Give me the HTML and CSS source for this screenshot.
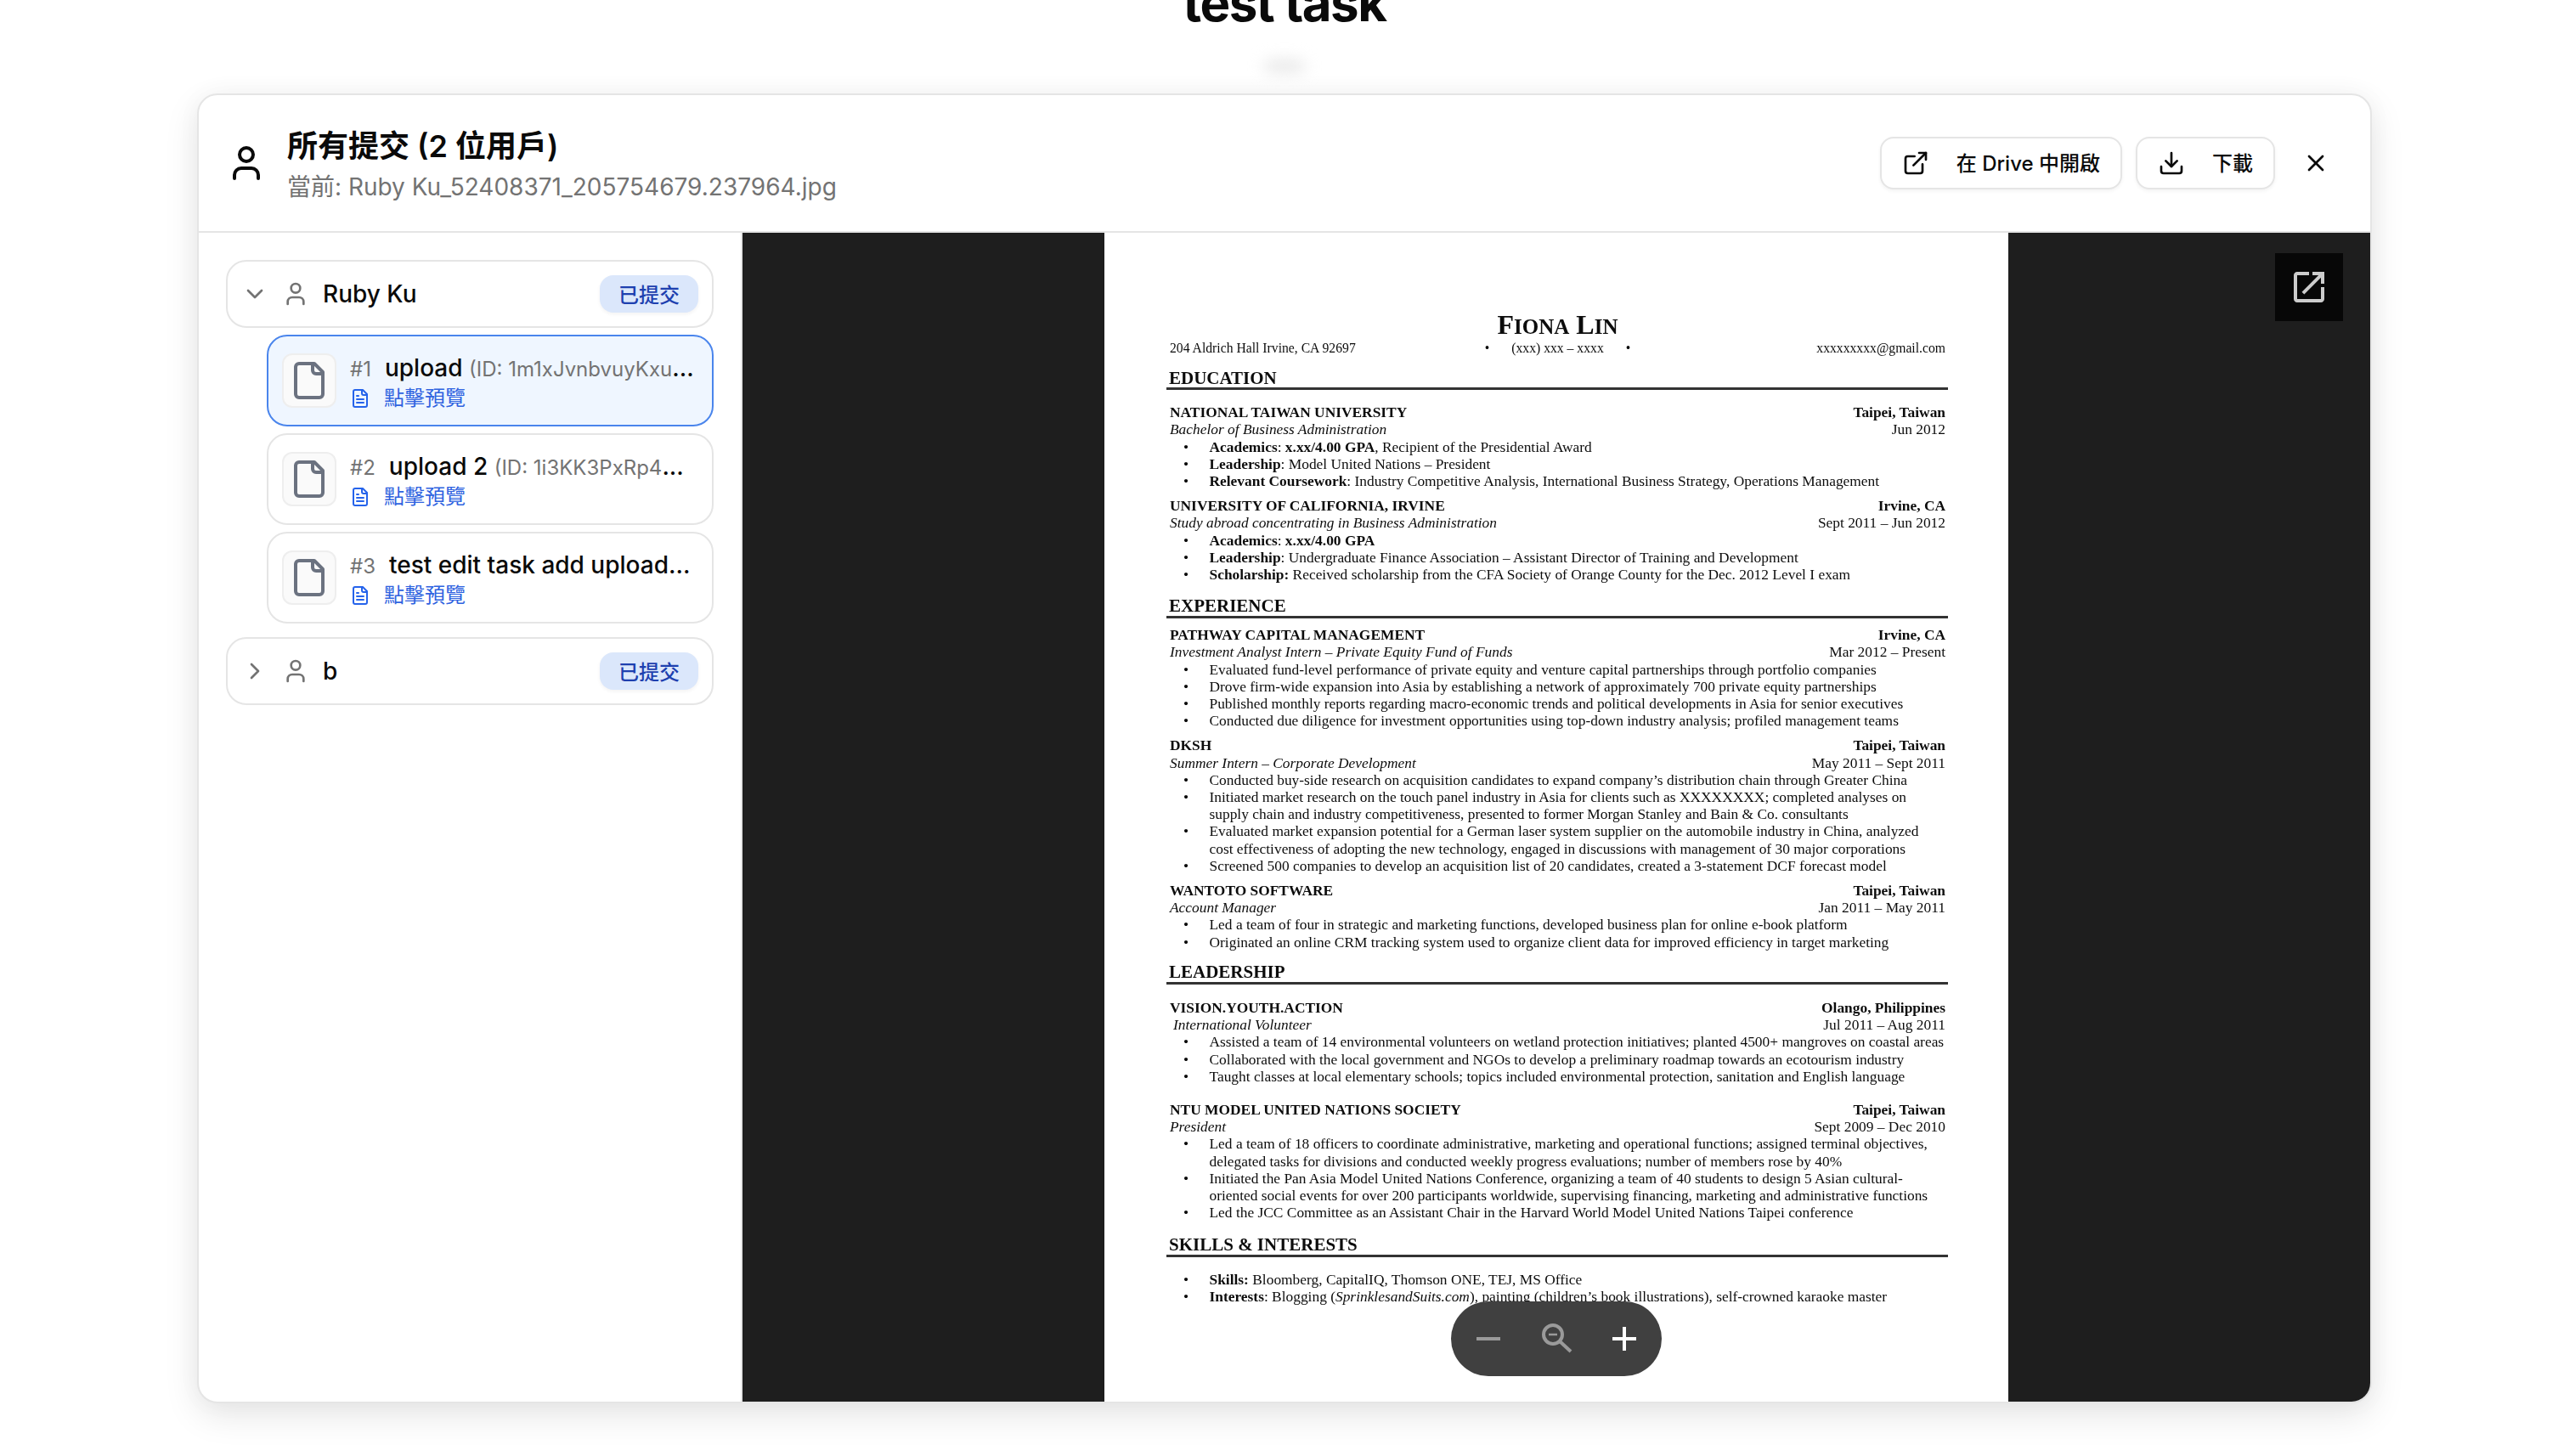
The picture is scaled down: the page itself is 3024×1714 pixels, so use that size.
FILE: index.html
```html
<!DOCTYPE html>
<html lang="zh-Hant">
<head>
<meta charset="utf-8">
<title>test task</title>
<link rel="stylesheet" href="styles.css">
</head>
<body>
<div class="page">
  <header class="page-head">
    <h1 class="page-title">test task</h1>
    <div class="page-blur"></div>
  </header>
  <section class="modal">
    <div class="modal-head">
      <svg class="ic ic-48 ic-dark" viewBox="0 0 24 24"><path d="M19 21v-2a4 4 0 0 0-4-4H9a4 4 0 0 0-4 4v2"/><circle cx="12" cy="7" r="4"/></svg>
      <div class="head-text">
        <div class="head-title">所有提交 (2 位用戶)</div>
        <div class="head-sub">當前: Ruby Ku_52408371_205754679.237964.jpg</div>
      </div>
      <div class="head-actions">
        <button class="btn"><svg class="ic ic-32 ic-dark" viewBox="0 0 24 24"><path d="M15 3h6v6"/><path d="M10 14 21 3"/><path d="M18 13v6a2 2 0 0 1-2 2H5a2 2 0 0 1-2-2V8a2 2 0 0 1 2-2h6"/></svg><span>在 Drive 中開啟</span></button>
        <button class="btn"><svg class="ic ic-32 ic-dark" viewBox="0 0 24 24"><path d="M12 15V3"/><path d="M21 15v4a2 2 0 0 1-2 2H5a2 2 0 0 1-2-2v-4"/><path d="m7 10 5 5 5-5"/></svg><span>下載</span></button>
        <button class="close"><svg class="ic ic-32 ic-dark" viewBox="0 0 24 24"><path d="M18 6 6 18"/><path d="m6 6 12 12"/></svg></button>
      </div>
    </div>
    <div class="modal-body">
      <aside class="side">
        <div class="user-card">
          <svg class="ic ic-32 ic-grey" viewBox="0 0 24 24"><path d="m6 9 6 6 6-6"/></svg>
          <svg class="ic ic-32 ic-grey" viewBox="0 0 24 24"><path d="M19 21v-2a4 4 0 0 0-4-4H9a4 4 0 0 0-4 4v2"/><circle cx="12" cy="7" r="4"/></svg>
          <span class="user-name">Ruby Ku</span>
          <span class="badge">已提交</span>
        </div>
        <div class="files">
          <div class="file-card selected">
            <div class="file-box"><svg class="ic ic-48 ic-file" viewBox="0 0 24 24"><path d="M15 2H6a2 2 0 0 0-2 2v16a2 2 0 0 0 2 2h12a2 2 0 0 0 2-2V7Z"/><path d="M14 2v4a2 2 0 0 0 2 2h4"/></svg></div>
            <div class="file-text">
              <div class="file-top"><span class="file-no">#1</span><span class="file-name">upload <span class="file-id">(ID: 1m1xJvnbvuyKxu</span></span><span class="file-more">...</span></div>
              <div class="file-link"><svg class="ic ic-24 ic-blue" viewBox="0 0 24 24"><path d="M15 2H6a2 2 0 0 0-2 2v16a2 2 0 0 0 2 2h12a2 2 0 0 0 2-2V7Z"/><path d="M14 2v4a2 2 0 0 0 2 2h4"/><path d="M10 9H8"/><path d="M16 13H8"/><path d="M16 17H8"/></svg><span>點擊預覽</span></div>
            </div>
          </div>
          <div class="file-card">
            <div class="file-box"><svg class="ic ic-48 ic-file" viewBox="0 0 24 24"><path d="M15 2H6a2 2 0 0 0-2 2v16a2 2 0 0 0 2 2h12a2 2 0 0 0 2-2V7Z"/><path d="M14 2v4a2 2 0 0 0 2 2h4"/></svg></div>
            <div class="file-text">
              <div class="file-top"><span class="file-no">#2</span><span class="file-name">upload 2 <span class="file-id">(ID: 1i3KK3PxRp4</span></span><span class="file-more">...</span></div>
              <div class="file-link"><svg class="ic ic-24 ic-blue" viewBox="0 0 24 24"><path d="M15 2H6a2 2 0 0 0-2 2v16a2 2 0 0 0 2 2h12a2 2 0 0 0 2-2V7Z"/><path d="M14 2v4a2 2 0 0 0 2 2h4"/><path d="M10 9H8"/><path d="M16 13H8"/><path d="M16 17H8"/></svg><span>點擊預覽</span></div>
            </div>
          </div>
          <div class="file-card">
            <div class="file-box"><svg class="ic ic-48 ic-file" viewBox="0 0 24 24"><path d="M15 2H6a2 2 0 0 0-2 2v16a2 2 0 0 0 2 2h12a2 2 0 0 0 2-2V7Z"/><path d="M14 2v4a2 2 0 0 0 2 2h4"/></svg></div>
            <div class="file-text">
              <div class="file-top"><span class="file-no">#3</span><span class="file-name">test edit task add upload</span><span class="file-more">...</span></div>
              <div class="file-link"><svg class="ic ic-24 ic-blue" viewBox="0 0 24 24"><path d="M15 2H6a2 2 0 0 0-2 2v16a2 2 0 0 0 2 2h12a2 2 0 0 0 2-2V7Z"/><path d="M14 2v4a2 2 0 0 0 2 2h4"/><path d="M10 9H8"/><path d="M16 13H8"/><path d="M16 17H8"/></svg><span>點擊預覽</span></div>
            </div>
          </div>
        </div>
        <div class="user-card user-last">
          <svg class="ic ic-32 ic-grey" viewBox="0 0 24 24"><path d="m9 18 6-6-6-6"/></svg>
          <svg class="ic ic-32 ic-grey" viewBox="0 0 24 24"><path d="M19 21v-2a4 4 0 0 0-4-4H9a4 4 0 0 0-4 4v2"/><circle cx="12" cy="7" r="4"/></svg>
          <span class="user-name">b</span>
          <span class="badge">已提交</span>
        </div>
      </aside>
      <div class="preview">
        <article class="paper">
          <div class="cv-name">F<span class="cv-sc">IONA</span> L<span class="cv-sc">IN</span></div>
          <div class="cv-contact"><span>204 Aldrich Hall Irvine, CA 92697</span><span class="cv-mid"><i>•</i><span>(xxx) xxx – xxxx</span><i>•</i></span><span class="cv-mail">xxxxxxxxx@gmail.com</span></div>

          <h2 class="cv-head cv-edu">EDUCATION</h2>
          <div class="cv-entry cv-first">
            <div class="cv-row cv-b"><span>NATIONAL TAIWAN UNIVERSITY</span><span>Taipei, Taiwan</span></div>
            <div class="cv-row"><em>Bachelor of Business Administration</em><span>Jun 2012</span></div>
            <ul class="cv-list">
              <li><span><b>Academics</b>: <b>x.xx/4.00 GPA</b>, Recipient of the Presidential Award</span></li>
              <li><span><b>Leadership</b>: Model United Nations – President</span></li>
              <li><span><b>Relevant Coursework</b>: Industry Competitive Analysis, International Business Strategy, Operations Management</span></li>
            </ul>
          </div>
          <div class="cv-entry">
            <div class="cv-row cv-b"><span>UNIVERSITY OF CALIFORNIA, IRVINE</span><span>Irvine, CA</span></div>
            <div class="cv-row"><em>Study abroad concentrating in Business Administration</em><span>Sept 2011 – Jun 2012</span></div>
            <ul class="cv-list">
              <li><span><b>Academics</b>: <b>x.xx/4.00 GPA</b></span></li>
              <li><span><b>Leadership</b>: Undergraduate Finance Association – Assistant Director of Training and Development</span></li>
              <li><span><b>Scholarship:</b> Received scholarship from the CFA Society of Orange County for the Dec. 2012 Level I exam</span></li>
            </ul>
          </div>

          <h2 class="cv-head cv-exp">EXPERIENCE</h2>
          <div class="cv-entry">
            <div class="cv-row cv-b"><span>PATHWAY CAPITAL MANAGEMENT</span><span>Irvine, CA</span></div>
            <div class="cv-row"><em>Investment Analyst Intern – Private Equity Fund of Funds</em><span>Mar 2012 – Present</span></div>
            <ul class="cv-list">
              <li><span>Evaluated fund-level performance of private equity and venture capital partnerships through portfolio companies</span></li>
              <li><span>Drove firm-wide expansion into Asia by establishing a network of approximately 700 private equity partnerships</span></li>
              <li><span>Published monthly reports regarding macro-economic trends and political developments in Asia for senior executives</span></li>
              <li><span>Conducted due diligence for investment opportunities using top-down industry analysis; profiled management teams</span></li>
            </ul>
          </div>
          <div class="cv-entry">
            <div class="cv-row cv-b"><span>DKSH</span><span>Taipei, Taiwan</span></div>
            <div class="cv-row"><em>Summer Intern – Corporate Development</em><span>May 2011 – Sept 2011</span></div>
            <ul class="cv-list">
              <li><span>Conducted buy-side research on acquisition candidates to expand company’s distribution chain through Greater China</span></li>
              <li><span>Initiated market research on the touch panel industry in Asia for clients such as XXXXXXXX; completed analyses on<br>supply chain and industry competitiveness, presented to former Morgan Stanley and Bain &amp; Co. consultants</span></li>
              <li><span>Evaluated market expansion potential for a German laser system supplier on the automobile industry in China, analyzed<br>cost effectiveness of adopting the new technology, engaged in discussions with management of 30 major corporations</span></li>
              <li><span>Screened 500 companies to develop an acquisition list of 20 candidates, created a 3-statement DCF forecast model</span></li>
            </ul>
          </div>
          <div class="cv-entry">
            <div class="cv-row cv-b"><span>WANTOTO SOFTWARE</span><span>Taipei, Taiwan</span></div>
            <div class="cv-row"><em>Account Manager</em><span>Jan 2011 – May 2011</span></div>
            <ul class="cv-list">
              <li><span>Led a team of four in strategic and marketing functions, developed business plan for online e-book platform</span></li>
              <li><span>Originated an online CRM tracking system used to organize client data for improved efficiency in target marketing</span></li>
            </ul>
          </div>

          <h2 class="cv-head cv-lead">LEADERSHIP</h2>
          <div class="cv-entry cv-mid-gap">
            <div class="cv-row cv-b"><span>VISION.YOUTH.ACTION</span><span>Olango, Philippines</span></div>
            <div class="cv-row"><em class="cv-indent">International Volunteer</em><span>Jul 2011 – Aug 2011</span></div>
            <ul class="cv-list">
              <li><span>Assisted a team of 14 environmental volunteers on wetland protection initiatives; planted 4500+ mangroves on coastal areas</span></li>
              <li><span>Collaborated with the local government and NGOs to develop a preliminary roadmap towards an ecotourism industry</span></li>
              <li><span>Taught classes at local elementary schools; topics included environmental protection, sanitation and English language</span></li>
            </ul>
          </div>
          <div class="cv-entry cv-wide">
            <div class="cv-row cv-b"><span>NTU MODEL UNITED NATIONS SOCIETY</span><span>Taipei, Taiwan</span></div>
            <div class="cv-row"><em>President</em><span>Sept 2009 – Dec 2010</span></div>
            <ul class="cv-list">
              <li><span>Led a team of 18 officers to coordinate administrative, marketing and operational functions; assigned terminal objectives,<br>delegated tasks for divisions and conducted weekly progress evaluations; number of members rose by 40%</span></li>
              <li><span>Initiated the Pan Asia Model United Nations Conference, organizing a team of 40 students to design 5 Asian cultural-<br>oriented social events for over 200 participants worldwide, supervising financing, marketing and administrative functions</span></li>
              <li><span>Led the JCC Committee as an Assistant Chair in the Harvard World Model United Nations Taipei conference</span></li>
            </ul>
          </div>

          <h2 class="cv-head cv-skills">SKILLS &amp; INTERESTS</h2>
          <ul class="cv-list cv-skill-list">
            <li><span><b>Skills:</b> Bloomberg, CapitalIQ, Thomson ONE, TEJ, MS Office</span></li>
            <li><span><b>Interests</b>: Blogging (<em>SprinklesandSuits.com</em>), painting (children’s book illustrations), self-crowned karaoke master</span></li>
          </ul>
        </article>
        <button class="popout"><svg class="ic-fill" viewBox="0 0 24 24"><path d="M19 19H5V5h7V3H5c-1.11 0-2 .9-2 2v14c0 1.1.89 2 2 2h14c1.1 0 2-.9 2-2v-7h-2v7zM14 3v2h3.59l-9.83 9.83 1.41 1.41L19 6.41V10h2V3h-7z"/></svg></button>
        <div class="zoom-pill">
          <svg class="pill-ic pill-dim" viewBox="0 0 48 48"><path d="M10 24h28"/></svg>
          <svg class="pill-ic pill-dim" viewBox="0 0 48 48"><circle cx="20" cy="19" r="11"/><path d="M28 27l13 12"/><path class="thin" d="M15 19h10"/></svg>
          <svg class="pill-ic pill-on" viewBox="0 0 48 48"><path d="M10 24h28"/><path d="M24 10v28"/></svg>
        </div>
      </div>
    </div>
  </section>
</div>
</body>
</html>
```

FILE: styles.css
```css
* { box-sizing: border-box; }
html, body { margin: 0; padding: 0; background: #fff; }
body { font-family: Inter, "Noto Sans CJK TC", sans-serif; color: #0a0a0a; }
.page { width: 3024px; height: 1714px; overflow: hidden; display: flex; flex-direction: column; align-items: center; }

.page-head { height: 110px; width: 100%; display: flex; flex-direction: column; align-items: center; flex: none; }
.page-title { margin: -33px 0 0; font-size: 60px; line-height: 72px; font-weight: 700; letter-spacing: -1.5px; }
.page-blur { width: 48px; height: 14px; margin-top: 32px; background: #e6e6e6; border-radius: 8px; filter: blur(9px); }

.modal { width: 2560px; height: 1542px; flex: none; background: #fff; border: 2px solid #e5e5e5; border-radius: 24px; overflow: hidden; display: flex; flex-direction: column; box-shadow: 0 14px 40px rgba(0,0,0,.1), 0 0 30px rgba(0,0,0,.03); }

.modal-head { height: 162px; flex: none; border-bottom: 2px solid #e5e5e5; display: flex; align-items: center; padding: 0 32px; gap: 24px; }
.head-text { flex: 1; min-width: 0; display: flex; flex-direction: column; gap: 4px; padding-top: 3px; }
.head-title { font-size: 36px; line-height: 48px; font-weight: 600; }
.head-sub { font-size: 28px; line-height: 40px; color: #737373; }
.head-actions { display: flex; align-items: center; gap: 16px; }

.ic { fill: none; stroke: currentColor; stroke-width: 2; stroke-linecap: round; stroke-linejoin: round; flex: none; display: block; }
.ic-48 { width: 48px; height: 48px; }
.ic-32 { width: 32px; height: 32px; }
.ic-24 { width: 24px; height: 24px; }
.ic-dark { color: #0a0a0a; }
.ic-grey { color: #737373; }
.ic-file { color: #6b7280; }
.ic-blue { color: #2563eb; }

.btn { height: 62px; padding: 0 24px; display: flex; align-items: center; gap: 32px; background: #fff; border: 2px solid #e5e5e5; border-radius: 16px; box-shadow: 0 2px 4px rgba(0,0,0,.05); font: 500 24px Inter, "Noto Sans CJK TC", sans-serif; color: #0a0a0a; }
.btn span { margin-bottom: 3px; }
.close { width: 64px; height: 64px; padding: 0; border: 0; background: none; display: flex; align-items: center; justify-content: center; }

.modal-body { flex: 1; min-height: 0; display: flex; }
.side { width: 640px; flex: none; padding: 32px 32px 0; border-right: 2px solid #e5e5e5; display: flex; flex-direction: column; }
.user-card { height: 80px; flex: none; border: 2px solid #e5e5e5; border-radius: 24px; display: flex; align-items: center; padding: 0 16px; gap: 16px; background: #fff; }
.user-last { margin-top: 16px; }
.user-name { flex: 1; font-size: 28px; font-weight: 500; }
.badge { width: 116px; height: 44px; flex: none; display: flex; align-items: center; justify-content: center; padding-bottom: 2px; background: #dbe7fb; color: #1e40af; border-radius: 16px; font-size: 24px; font-weight: 500; box-shadow: 0 2px 4px rgba(0,0,0,.05); }

.files { margin: 8px 0 0 48px; display: flex; flex-direction: column; gap: 8px; }
.file-card { height: 108px; border: 2px solid #e5e5e5; border-radius: 24px; display: flex; align-items: center; padding: 0 16px; gap: 16px; background: #fff; }
.file-card.selected { background: #eff6ff; border-color: #4a85ec; }
.file-box { width: 64px; height: 64px; flex: none; background: #fafafa; border: 2px solid #eeeeee; border-radius: 12px; display: flex; align-items: center; justify-content: center; }
.file-text { flex: 1; min-width: 0; display: flex; flex-direction: column; }
.file-top { display: flex; align-items: baseline; line-height: 40px; white-space: nowrap; }
.file-no { font-size: 24px; color: #737373; flex: none; margin-right: 16px; }
.file-name { font-size: 28px; font-weight: 500; }
.file-more { font-size: 28px; font-weight: 500; }
.file-id { font-size: 24px; font-weight: 400; color: #737373; }
.file-link { display: flex; align-items: center; gap: 16px; color: #2f63e0; font-size: 24px; line-height: 28px; }

.preview { flex: 1; min-width: 0; position: relative; background: #1e1e1e; display: flex; justify-content: center; }
.paper { width: 1064px; flex: none; background: #fff; padding: 90px 74px 0 77px; font-family: "Liberation Serif", serif; color: #0c0c0c; font-size: 17.4px; line-height: 20.2px; white-space: nowrap; overflow: hidden; filter: blur(.45px); }

.cv-name { text-align: center; font-size: 32px; line-height: 36px; font-weight: 700; }
.cv-sc { font-size: 25px; }
.cv-contact { display: grid; grid-template-columns: 1fr auto 1fr; margin-top: -3px; font-size: 15.7px; }
.cv-mid { display: flex; gap: 26px; }
.cv-mid i { font-style: normal; }
.cv-mail { text-align: right; }
.cv-head { margin: 0 -3px 0 -4px; padding-left: 3px; font-size: 21px; line-height: 24px; font-weight: 700; border-bottom: 3px solid #333; }
.cv-edu { margin-top: 14px; line-height: 22px; }
.cv-exp { margin-top: 15px; }
.cv-lead { margin-top: 13px; }
.cv-skills { margin-top: 16px; }
.cv-entry { margin-top: 9px; }
.cv-first { margin-top: 16px; }
.cv-mid-gap { margin-top: 17px; }
.cv-wide { margin-top: 19px; }
.cv-row { display: flex; justify-content: space-between; }
.cv-b { font-weight: 700; }
.cv-indent { margin-left: 4px; }
.cv-list { list-style: none; margin: 0; padding: 0 0 0 16px; }
.cv-list li { display: grid; grid-template-columns: 30.5px 1fr; }
.cv-list li::before { content: "•"; }
.cv-skill-list { margin-top: 16px; line-height: 20px; }

.popout { position: absolute; top: 24px; right: 32px; width: 80px; height: 80px; padding: 16px; border: 0; background: #070707; }
.ic-fill { width: 48px; height: 48px; fill: #cccccc; display: block; }

.zoom-pill { position: absolute; bottom: 30px; left: 50%; transform: translateX(-50%); width: 248px; height: 88px; border-radius: 44px; background: #404040; display: flex; align-items: center; justify-content: center; gap: 32px; }
.pill-ic { width: 48px; height: 48px; fill: none; stroke-width: 4; flex: none; display: block; }
.pill-dim { stroke: #9a9a9a; }
.pill-on { stroke: #fff; }
.pill-ic .thin { stroke-width: 2.5; }
```
